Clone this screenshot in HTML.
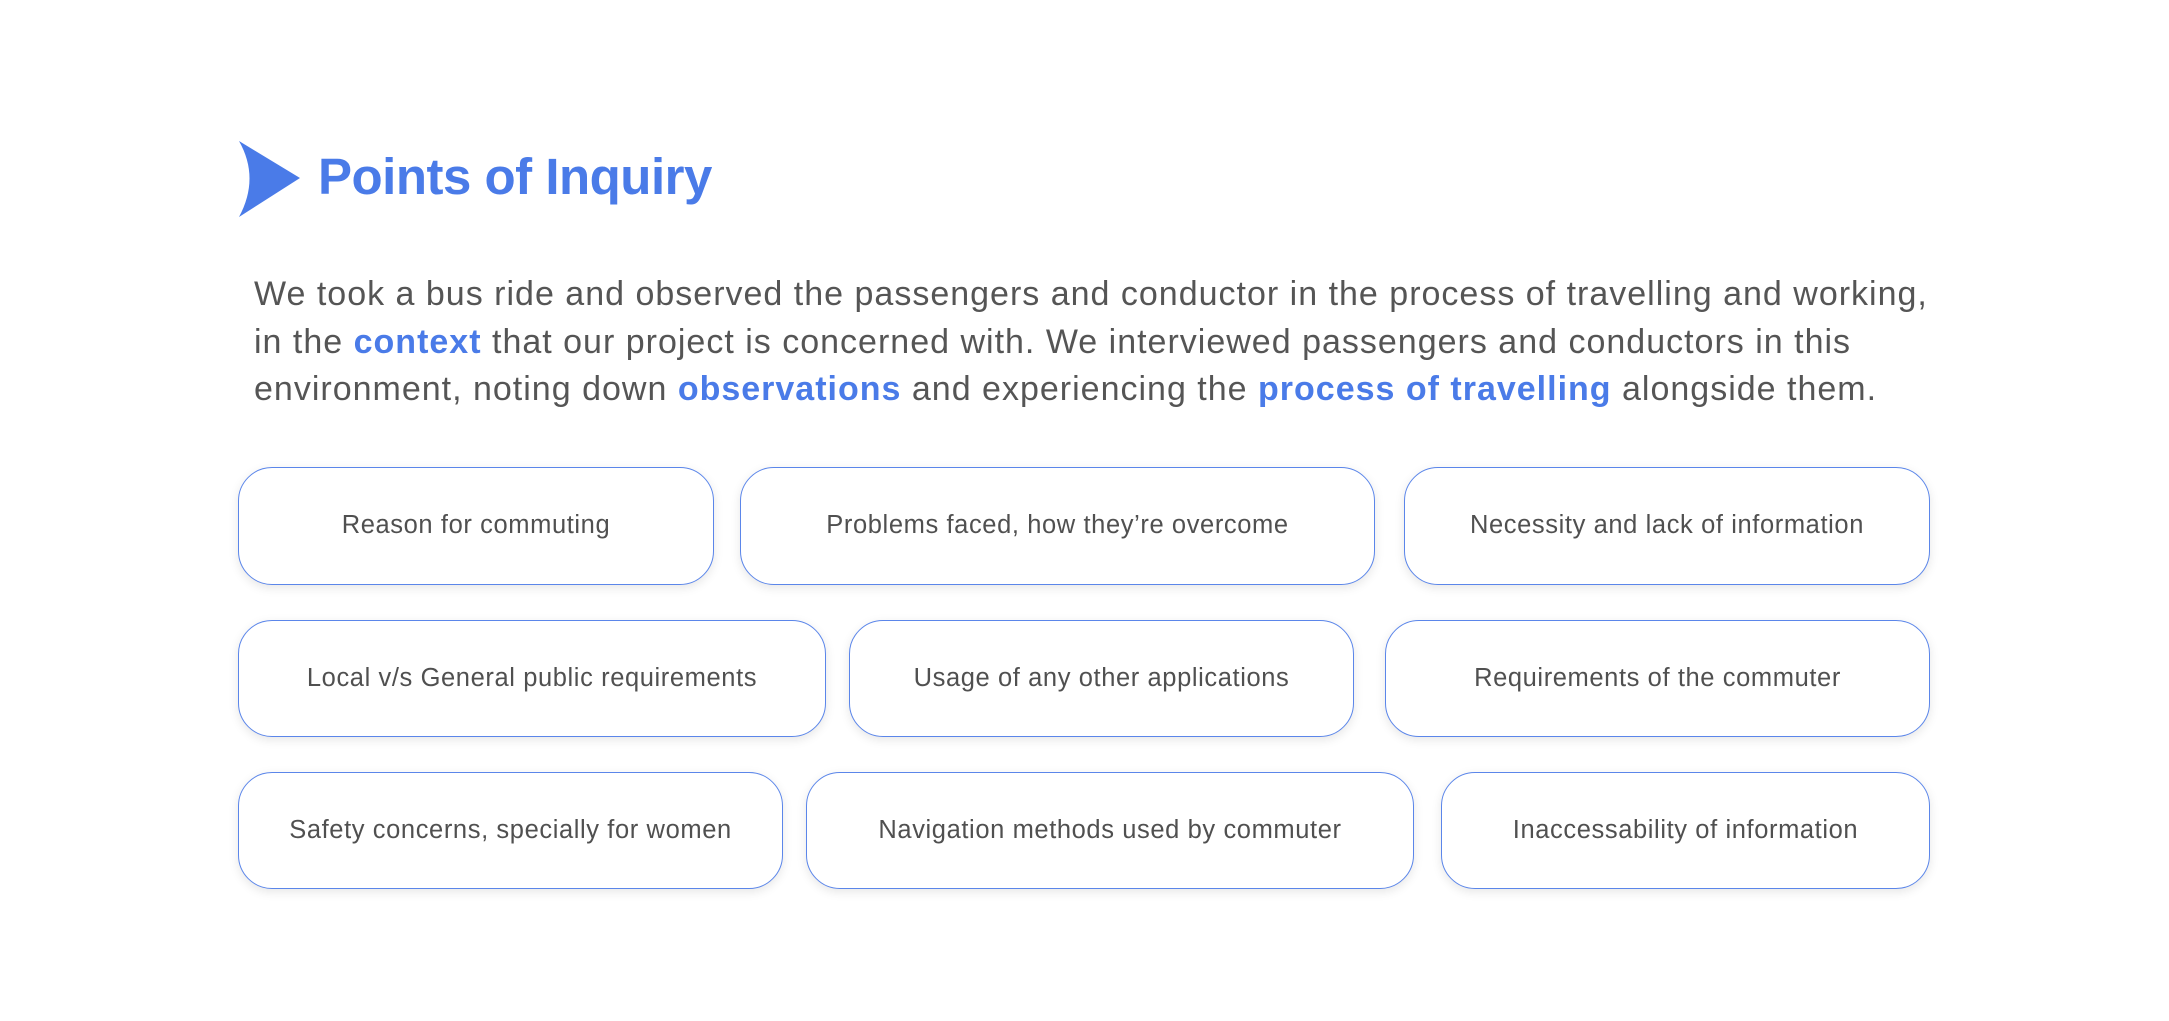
<!DOCTYPE html>
<html><head><meta charset="utf-8"><style>
html,body{margin:0;padding:0;background:#fff;width:2169px;height:1021px;overflow:hidden;font-family:"Liberation Sans",sans-serif}
.t{position:absolute;left:318px;top:147px;font-size:51px;font-weight:bold;color:#4a7be8;letter-spacing:-0.5px}
.p{position:absolute;left:254px;top:271px;font-size:34px;line-height:47.5px;color:#555;white-space:nowrap;letter-spacing:1px}
.p b{color:#4a7be8;font-weight:bold}
.b{position:absolute;box-sizing:border-box;border:1.6px solid #5b86ea;border-radius:34px;background:#fff;box-shadow:0 3px 10px rgba(0,0,0,.10);display:flex;align-items:center;justify-content:center;font-size:25.5px;letter-spacing:0.6px;color:#505050;padding-bottom:1px}
</style></head><body>
<svg style="position:absolute;left:238px;top:140px" width="64" height="78" viewBox="0 0 64 78"><path d="M1 1 L62 38 L1 77 Q22 38 1 1 Z" fill="#4a7be8"/></svg>
<div class="t">Points of Inquiry</div>
<div class="p">We took a bus ride and observed the passengers and conductor in the process of travelling and working,<br>in the <b>context</b> that our project is concerned with. We interviewed passengers and conductors in this<br>environment, noting down <b>observations</b> and experiencing the <b>process of travelling</b> alongside them.</div>
<div class="b" style="left:238px;top:467px;width:476px;height:118px">Reason for commuting</div>
<div class="b" style="left:740px;top:467px;width:635px;height:118px">Problems faced, how they’re overcome</div>
<div class="b" style="left:1404px;top:467px;width:526px;height:118px">Necessity and lack of information</div>
<div class="b" style="left:238px;top:620px;width:588px;height:117px">Local v/s General public requirements</div>
<div class="b" style="left:849px;top:620px;width:505px;height:117px">Usage of any other applications</div>
<div class="b" style="left:1385px;top:620px;width:545px;height:117px">Requirements of the commuter</div>
<div class="b" style="left:238px;top:772px;width:545px;height:117px">Safety concerns, specially for women</div>
<div class="b" style="left:806px;top:772px;width:608px;height:117px">Navigation methods used by commuter</div>
<div class="b" style="left:1441px;top:772px;width:489px;height:117px">Inaccessability of information</div>
</body></html>
